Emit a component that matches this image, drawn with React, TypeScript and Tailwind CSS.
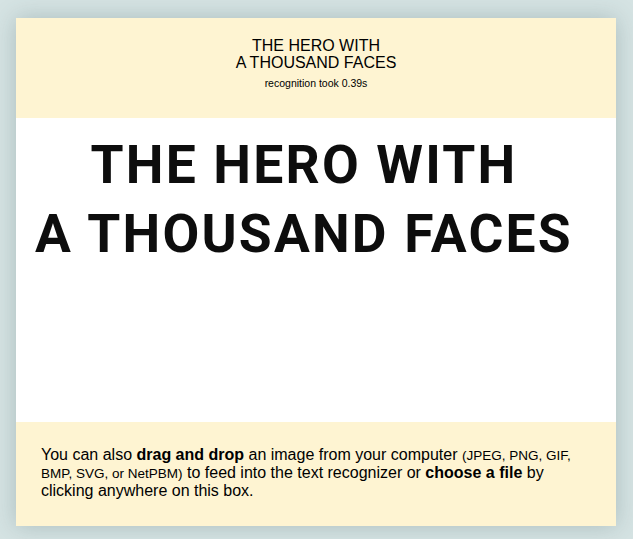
export default function App() {
  return (
    <div className="min-h-screen bg-[#d5e3e3] pt-[18px] pl-[16px]">
      <div className="w-[600px] shadow-[0_0_22px_rgba(60,90,90,0.28)]">
        <div className="h-[100px] bg-[#fef4d2] pt-[19px] text-center font-['Liberation_Sans',Arial,sans-serif] text-black">
          <div className="text-[16px] leading-[17px]">
            THE HERO WITH
            <br />
            A THOUSAND FACES
          </div>
          <div className="mt-[6px] text-[10.5px] leading-[13px]">recognition took 0.39s</div>
        </div>

        <div className="h-[304px] bg-white pt-[12px] pr-[24px] text-center font-['Roboto',sans-serif] text-[53.4px] font-bold leading-[69px] tracking-[2.2px] text-[#0d0d0d]">
          <div>THE HERO WITH</div>
          <div>A THOUSAND FACES</div>
        </div>

        <div className="h-[104px] bg-[#fef4d2] pt-[24px] pl-[25px] pr-[30px] font-['Liberation_Sans',Arial,sans-serif] text-[16px] leading-[18px] text-black">
          <div>
            You can also <b>drag and drop</b> an image from your computer{" "}
            <span className="text-[13.5px] leading-[14px]">(JPEG, PNG, GIF,</span>
          </div>
          <div>
            <span className="text-[13.5px] leading-[14px]">BMP, SVG, or NetPBM)</span> to feed into the text
            recognizer or <b>choose a file</b> by
          </div>
          <div>clicking anywhere on this box.</div>
        </div>
      </div>
    </div>
  );
}
